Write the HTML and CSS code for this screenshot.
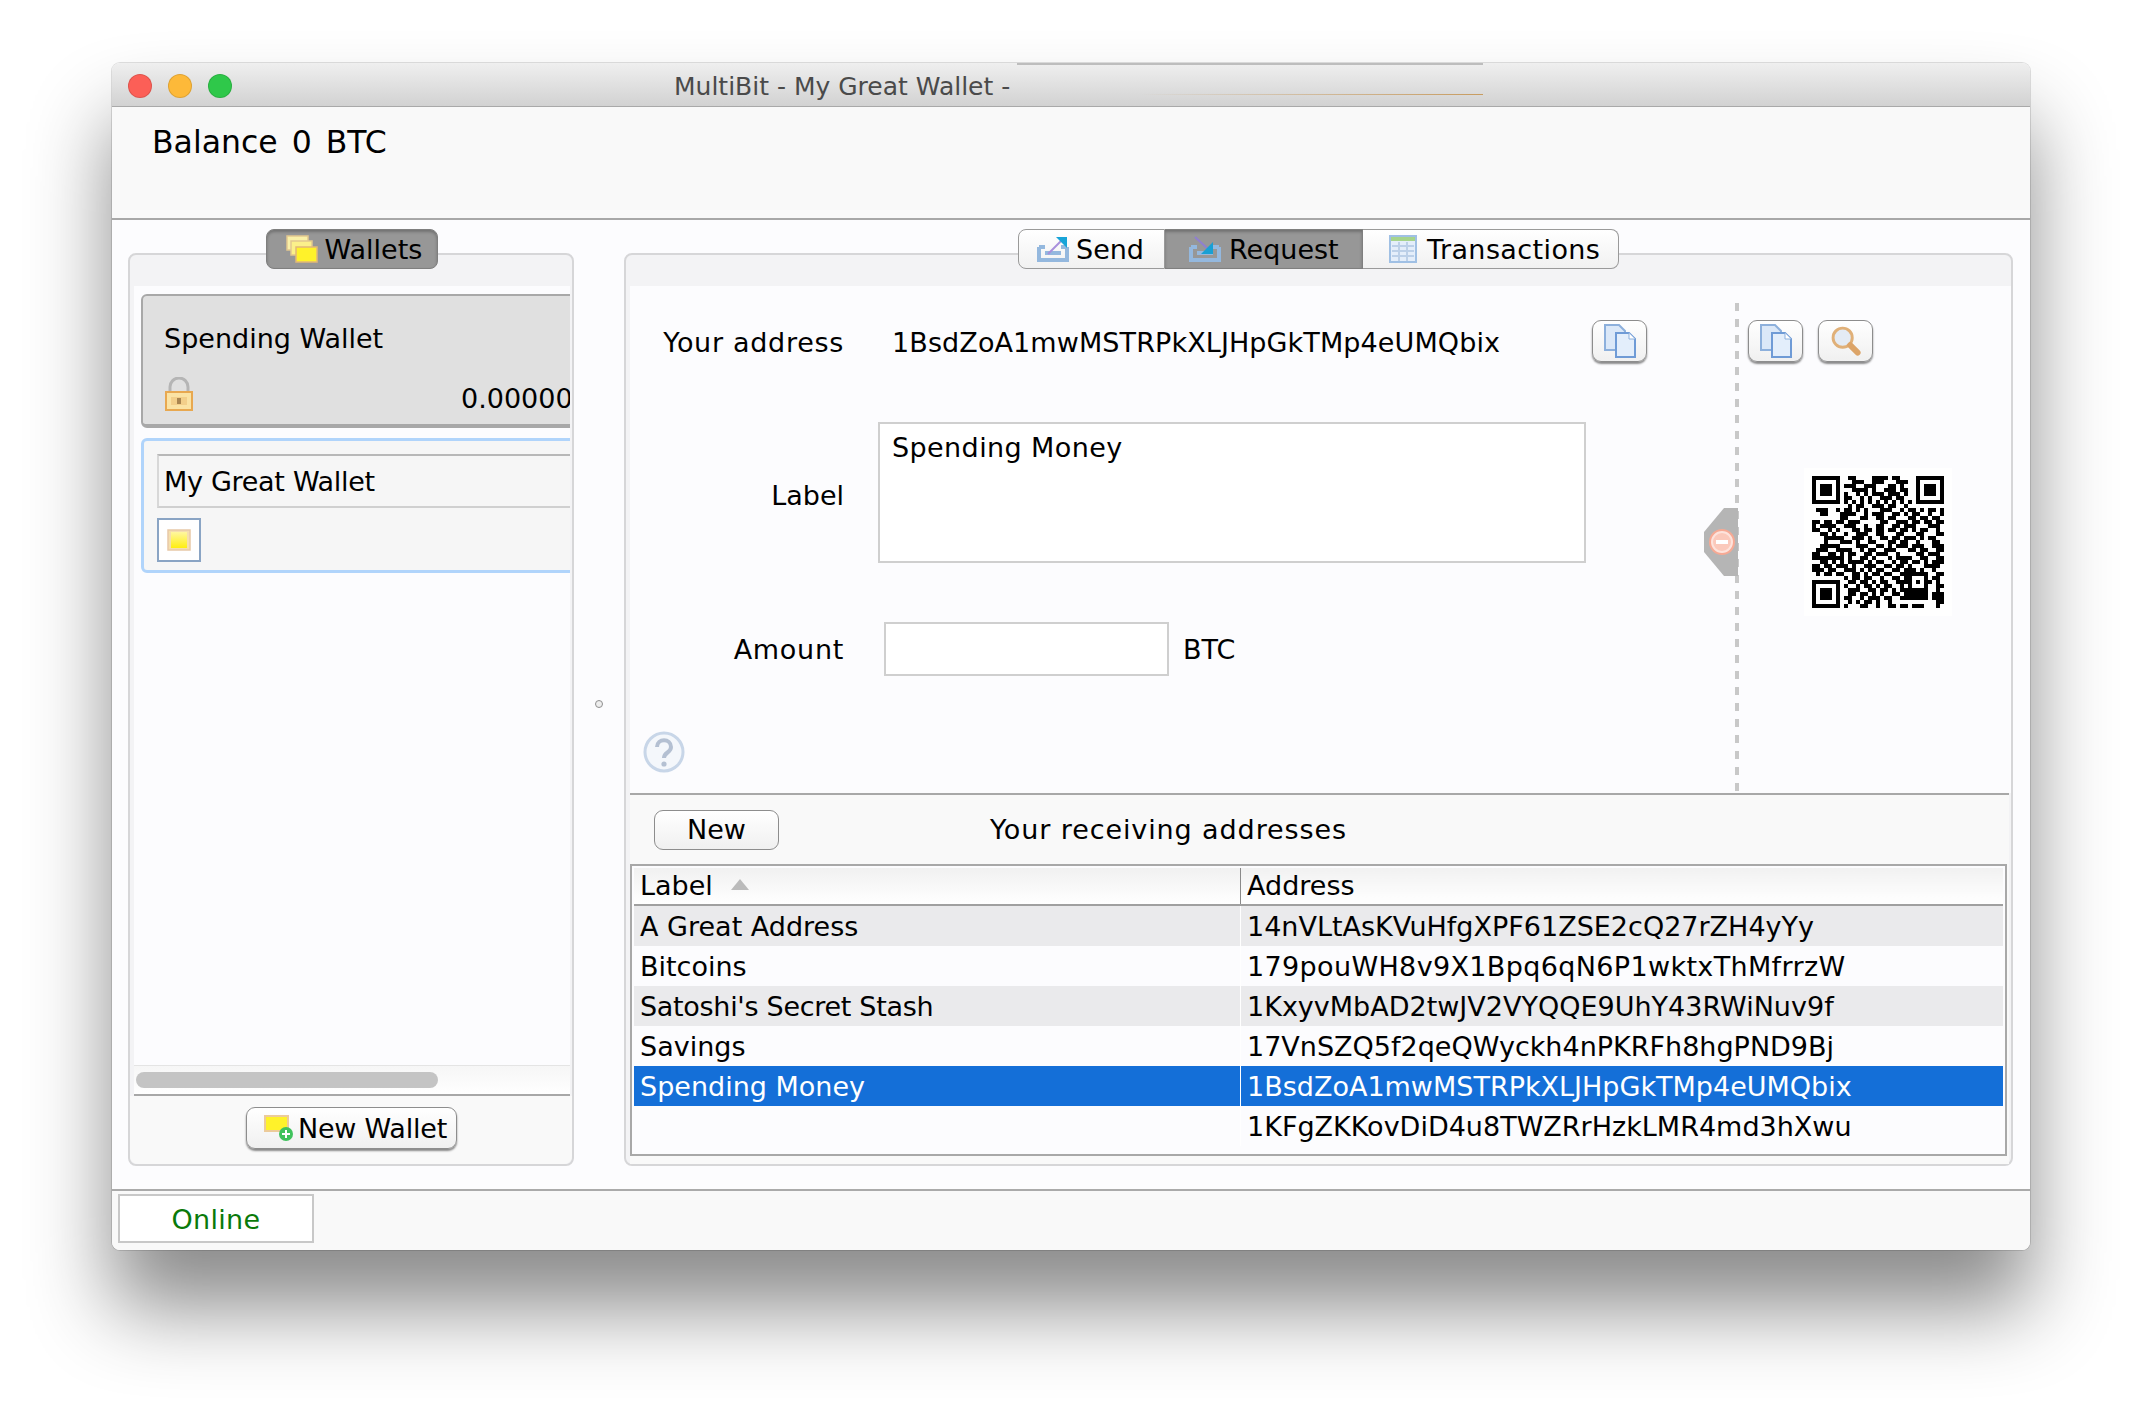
FILE: index.html
```html
<!DOCTYPE html>
<html lang="en">
<head>
    <meta charset="UTF-8">
    <meta name="viewport" content="width=device-width, initial-scale=1.0">
    <title>MultiBit - My Great Wallet -</title>
    <link rel="stylesheet" href="styles.css">
</head>
<body>
    <svg class="icon-defs" width="0" height="0">
        <defs>
            <linearGradient id="bill" x1="0" y1="0" x2="0" y2="1">
                <stop offset="0" stop-color="#fff7a0"/>
                <stop offset="1" stop-color="#ffee10"/>
            </linearGradient>
            <symbol id="i-copy" viewBox="0 0 34 34">
                <path d="M2 1h14l6 6v19H2z" fill="#dbe8f8" stroke="#8db0dc" stroke-width="2"/>
                <path d="M13 9h13l6 6v18H13z" fill="#e3eefb" stroke="#6f9bd6" stroke-width="2"/>
                <path d="M26 9v6h6" fill="#fff" stroke="#8db0dc"/>
            </symbol>
            <symbol id="i-bill" viewBox="0 0 24 22">
                <rect x="1" y="1" width="22" height="20" fill="#f5dfae" stroke="#e8c9a8" stroke-width="1.5"/>
                <rect x="4" y="3" width="16" height="16" fill="url(#bill)"/>
            </symbol>
        </defs>
    </svg>

    <div class="window">
        <div class="titlebar">
            <span class="light light-red"></span>
            <span class="light light-amber"></span>
            <span class="light light-green"></span>
            <span class="title-text">MultiBit - My Great Wallet -</span>
            <span class="title-glitch-top"></span>
            <span class="title-glitch-low"></span>
        </div>

        <div class="balance-bar">
            <span>Balance</span>
            <span>0</span>
            <span>BTC</span>
        </div>

        <div class="main">
            <!-- Wallets -->
            <div class="panel wallets-panel">
                <div class="tabs">
                    <div class="tab tab-single tab-active">
                        <svg class="tab-icon" width="32" height="28" viewBox="0 0 32 28">
                            <rect x="1" y="1" width="21" height="14" fill="#f9f0a8" stroke="#e2c78e" stroke-width="1.5"/>
                            <rect x="5" y="6" width="21" height="14" fill="#fbf08a" stroke="#e2c78e" stroke-width="1.5"/>
                            <rect x="10" y="12" width="21" height="15" fill="#fff22a" stroke="#e2b878" stroke-width="1.5"/>
                        </svg>
                        Wallets
                    </div>
                </div>
                <div class="wallet-list">
                    <div class="wallet-card wallet-card-idle">
                        <div class="wallet-name">Spending Wallet</div>
                        <div class="wallet-row">
                            <svg class="lock-icon" width="30" height="34" viewBox="0 0 30 34">
                                <path d="M6 16V10a9 9 0 0 1 18 0v6" fill="none" stroke="#b5b5b5" stroke-width="3"/>
                                <rect x="2" y="15" width="26" height="18" fill="#fbe3a4" stroke="#e8a850" stroke-width="2"/>
                                <rect x="7" y="20" width="16" height="8" fill="#f3cf8a"/>
                                <rect x="13" y="21" width="4" height="6" fill="#a98550"/>
                            </svg>
                            <span class="wallet-amount">0.00000000</span>
                        </div>
                    </div>
                    <div class="wallet-card wallet-card-active">
                        <div class="wallet-input">My Great Wallet</div>
                        <div class="wallet-icon-box">
                            <svg width="24" height="22"><use href="#i-bill"/></svg>
                        </div>
                    </div>
                </div>
                <div class="hscroll"><div class="hscroll-thumb"></div></div>
                <div class="panel-foot">
                    <button class="btn btn-new-wallet">
                        <svg width="30" height="26" viewBox="0 0 30 26">
                            <rect x="1" y="1" width="23" height="15" fill="#fff22a" stroke="#eccb9a" stroke-width="2"/>
                            <circle cx="22" cy="19" r="7" fill="#3fc25c"/>
                            <path d="M22 15v8M18 19h8" stroke="#fff" stroke-width="2"/>
                        </svg>
                        New Wallet
                    </button>
                </div>
            </div>

            <div class="splitter"><span class="splitter-dot"></span></div>

            <!-- Send / Request / Transactions -->
            <div class="panel detail-panel">
                <div class="tabs">
                    <div class="tab tab-first tab-send">
                        <svg class="tab-icon" width="32" height="26" viewBox="0 0 32 26">
                            <path d="M2 11v13h28V11M8 11H2M30 11h-6M8 17h16" fill="none" stroke="#94b8de" stroke-width="4"/>
                            <path d="M11 18 25 4" stroke="#a88fdc" stroke-width="2"/>
                            <path d="M19 1h11v11z" fill="#18a4d8"/>
                        </svg>
                        Send
                    </div>
                    <div class="tab tab-active tab-request">
                        <svg class="tab-icon" width="32" height="26" viewBox="0 0 32 26">
                            <path d="M2 11v13h28V11M8 11H2M30 11h-6M8 17h16" fill="none" stroke="#94b8de" stroke-width="4"/>
                            <path d="M6 1 19 13" stroke="#8f7fd0" stroke-width="2"/>
                            <path d="M24 6v12H12z" fill="#18a0d4"/>
                        </svg>
                        Request
                    </div>
                    <div class="tab tab-last tab-transactions">
                        <svg class="tab-icon" width="28" height="28" viewBox="0 0 28 28">
                            <rect x="1" y="1" width="26" height="26" fill="#e4eefa" stroke="#a0c0e4" stroke-width="2"/>
                            <rect x="2" y="2" width="24" height="4" fill="#a6d48c"/>
                            <path d="M3 11h22M3 16h22M3 21h22M10 7v19M18 7v19" stroke="#bcd0e8" stroke-width="2"/>
                        </svg>
                        Transactions
                    </div>
                </div>

                <div class="request-area">
                    <div class="request-form">
                        <div class="form-row form-row-address">
                            <div class="form-label">Your address</div>
                            <div class="address-value">1BsdZoA1mwMSTRPkXLJHpGkTMp4eUMQbix</div>
                            <button class="btn btn-icon btn-copy-address"><svg width="34" height="34"><use href="#i-copy"/></svg></button>
                        </div>
                        <div class="form-row form-row-label">
                            <div class="form-label">Label</div>
                            <div class="text-area">Spending Money</div>
                        </div>
                        <div class="form-row form-row-amount">
                            <div class="form-label">Amount</div>
                            <div class="amount-input"></div>
                            <div class="amount-unit">BTC</div>
                        </div>
                        <svg class="help-icon" width="42" height="42" viewBox="0 0 42 42">
                            <circle cx="21" cy="21" r="19" fill="#f4f7fb" stroke="#c8d6e8" stroke-width="3"/>
                            <path d="M14 16c0-9 14-9 14 0 0 6-7 5-7 11" fill="none" stroke="#b4c0d2" stroke-width="4"/>
                            <circle cx="21" cy="33" r="2.6" fill="#b4c0d2"/>
                        </svg>
                    </div>

                    <div class="qr-column">
                        <div class="collapse-tab">
                            <svg width="34" height="68" viewBox="0 0 34 68">
                                <path d="M34 0H20L0 24v20l20 24h14z" fill="#b5b5b5"/>
                                <circle cx="18" cy="34" r="13" fill="#f6a994"/>
                                <circle cx="18" cy="34" r="10" fill="#fbc9bb" stroke="#fde3dc" stroke-width="2"/>
                                <rect x="12" y="32" width="12" height="4" fill="#fff"/>
                            </svg>
                        </div>
                        <div class="qr-buttons">
                            <button class="btn btn-icon"><svg width="34" height="34"><use href="#i-copy"/></svg></button>
                            <button class="btn btn-icon">
                                <svg class="search-icon" width="30" height="30" viewBox="0 0 36 36">
                                    <circle cx="14" cy="14" r="11.5" fill="#e4ebf4" stroke="#e0b078" stroke-width="3.5"/>
                                    <path d="M23 23l9 9" stroke="#dca468" stroke-width="7" stroke-linecap="round"/>
                                </svg>
                            </button>
                        </div>
                        <div class="qr-box" id="qr"></div>
                    </div>
                </div>

                <div class="addresses">
                    <div class="addresses-head">
                        <button class="btn btn-new">New</button>
                        <div class="addresses-title">Your receiving addresses</div>
                    </div>
                    <div class="table-wrap">
                        <table class="address-table">
                            <thead>
                                <tr>
                                    <th class="col-label">Label <span class="sort-arrow"></span></th>
                                    <th>Address</th>
                                </tr>
                            </thead>
                            <tbody>
                                <tr class="row-alt"><td>A Great Address</td><td>14nVLtAsKVuHfgXPF61ZSE2cQ27rZH4yYy</td></tr>
                                <tr><td>Bitcoins</td><td class="addr-wide">179pouWH8v9X1Bpq6qN6P1wktxThMfrrzW</td></tr>
                                <tr class="row-alt"><td class="label-tight">Satoshi's Secret Stash</td><td>1KxyvMbAD2twJV2VYQQE9UhY43RWiNuv9f</td></tr>
                                <tr><td>Savings</td><td>17VnSZQ5f2qeQWyckh4nPKRFh8hgPND9Bj</td></tr>
                                <tr class="row-selected"><td>Spending Money</td><td>1BsdZoA1mwMSTRPkXLJHpGkTMp4eUMQbix</td></tr>
                                <tr><td></td><td>1KFgZKKovDiD4u8TWZRrHzkLMR4md3hXwu</td></tr>
                            </tbody>
                        </table>
                    </div>
                </div>
            </div>
        </div>

        <div class="status-bar">
            <div class="status-online">Online</div>
        </div>
    </div>
    <script src="qr.js"></script>
</body>
</html>
```

FILE: styles.css
```css
html, body {
    margin: 0;
    padding: 0;
    background: #fff;
    overflow: hidden;
}

body {
    height: 1410px;
    padding: 63px 112px 0;
    box-sizing: border-box;
    font-family: "DejaVu Sans", "Liberation Sans", sans-serif;
    font-size: 27px;
    color: #000;
}

.icon-defs {
    position: absolute;
}

.window {
    width: 1918px;
    height: 1187px;
    display: flex;
    flex-direction: column;
    background: #fcfcfe;
    border-radius: 8px;
    box-shadow: 0 58px 82px rgba(0, 0, 0, 0.46), 0 0 0 1px rgba(0, 0, 0, 0.12);
}

/* title bar */
.titlebar {
    position: relative;
    height: 44px;
    flex: none;
    display: flex;
    align-items: center;
    gap: 16px;
    padding: 2px 0 0 16px;
    box-sizing: border-box;
    background: linear-gradient(#efefef, #d2d2d2);
    border-bottom: 1px solid #a9a9a9;
    border-radius: 8px 8px 0 0;
}

.light {
    width: 24px;
    height: 24px;
    border-radius: 50%;
    box-sizing: border-box;
    border: 1px solid rgba(0, 0, 0, 0.12);
}

.light-red { background: #fc5f57; }
.light-amber { background: #fdb939; }
.light-green { background: #2fc84a; }

.title-text {
    margin-left: 426px;
    padding-top: 2px;
    font-size: 25px;
    color: #4a4a4a;
    white-space: nowrap;
}

.title-glitch-top {
    position: absolute;
    left: 905px;
    top: 0;
    width: 466px;
    height: 2px;
    background: #bdbdbd;
}

.title-glitch-low {
    position: absolute;
    left: 1028px;
    top: 31px;
    width: 343px;
    height: 1px;
    background: linear-gradient(to right, rgba(200, 150, 90, 0), #c89c60);
}

/* balance */
.balance-bar {
    height: 113px;
    flex: none;
    box-sizing: border-box;
    display: flex;
    gap: 14px;
    padding: 17px 40px 0;
    font-size: 31.5px;
    background: #f9f9f9;
    border-bottom: 2px solid #a8a8a8;
}

/* main area */
.main {
    flex: 1;
    display: flex;
    align-items: stretch;
    padding: 33px 17px 23px 16px;
    min-height: 0;
}

.panel {
    display: flex;
    flex-direction: column;
    box-sizing: border-box;
    background: #f3f3f5;
    border: 2px solid #d6d6d8;
    border-radius: 8px;
}

.wallets-panel {
    width: 446px;
    flex: none;
    padding: 0 2px 0 4px;
}

.detail-panel {
    flex: 1;
    padding: 0 4px;
}

.splitter {
    width: 50px;
    flex: none;
    display: flex;
    align-items: center;
    justify-content: center;
}

.splitter-dot {
    width: 8px;
    height: 8px;
    margin-bottom: 12px;
    box-sizing: border-box;
    border: 1px solid #8f8f8f;
    border-radius: 50%;
    background: #eee;
}

/* tabs */
.tabs {
    height: 40px;
    margin: -26px 0 17px;
    display: flex;
    justify-content: center;
    flex: none;
}

.tab {
    display: flex;
    align-items: center;
    gap: 10px;
    box-sizing: border-box;
    font-size: 27px;
    background: linear-gradient(#fff, #f1f1f1);
    border: 1px solid #9a9a9a;
    border-left: 0;
    padding: 0 12px 0 18px;
    white-space: nowrap;
}

.tab-icon {
    flex: none;
}

.tab-first {
    border-left: 1px solid #9a9a9a;
    border-radius: 8px 0 0 8px;
}

.tab-last {
    border-radius: 0 8px 8px 0;
}

.tab-single {
    width: 172px;
    gap: 7px;
    padding-left: 19px;
    margin-left: -1px;
    border-left: 1px solid #888;
    border-radius: 8px;
}

.tab-active {
    background: #979797;
    border-color: #7f7f7f;
    box-shadow: inset 0 2px 3px rgba(0, 0, 0, 0.25);
}

.tab-send {
    width: 147px;
    padding-left: 18px;
    gap: 7px;
}

.tab-request {
    width: 198px;
    padding-left: 24px;
    gap: 8px;
}

.tab-transactions {
    width: 256px;
    padding-left: 26px;
    letter-spacing: 0.4px;
}

/* wallet list */
.wallet-list {
    flex: 1;
    background: #fcfcfe;
    overflow: hidden;
    padding: 8px 0 0 7px;
    min-height: 0;
}

.wallet-card {
    width: 560px;
    box-sizing: border-box;
    white-space: nowrap;
}

.wallet-card-idle {
    height: 134px;
    padding: 25px 21px 0;
    background: #e0e0e0;
    border: 2px solid #a8a8a8;
    border-bottom-width: 4px;
    border-radius: 6px;
}

.wallet-name {
    font-size: 27px;
    line-height: 36px;
}

.wallet-row {
    display: flex;
    align-items: flex-end;
    margin-top: 20px;
}

.lock-icon {
    flex: none;
}

.wallet-amount {
    margin-left: 267px;
    line-height: 34px;
    position: relative;
    top: 5px;
}

.wallet-card-active {
    height: 135px;
    margin-top: 10px;
    padding: 13px;
    background: #f6f6f6;
    border: 3px solid #b0d4fb;
    border-radius: 6px;
}

.wallet-input {
    height: 54px;
    box-sizing: border-box;
    padding-left: 5px;
    line-height: 52px;
    letter-spacing: -0.3px;
    border-top: 2px solid #b8b8b8;
    border-bottom: 2px solid #d0d0d0;
    border-left: 2px solid #d8d8d8;
}

.wallet-icon-box {
    width: 44px;
    height: 44px;
    margin-top: 10px;
    box-sizing: border-box;
    display: flex;
    align-items: center;
    justify-content: center;
    background: #fff;
    border: 2px solid #8aa4c4;
}

.hscroll {
    height: 31px;
    flex: none;
    box-sizing: border-box;
    padding: 6px 2px;
    background: linear-gradient(#f6f6f6, #fff);
    border-top: 1px solid #e4e4e4;
    border-bottom: 2px solid #a8a8a8;
}

.hscroll-thumb {
    width: 302px;
    height: 16px;
    border-radius: 8px;
    background: #c4c4c4;
}

.panel-foot {
    height: 68px;
    flex: none;
    display: flex;
    justify-content: center;
    padding-top: 11px;
    box-sizing: border-box;
    background: #f9f9f9;
    margin: 0 -2px 0 -4px;
    border-radius: 0 0 8px 8px;
}

/* buttons */
.btn {
    box-sizing: border-box;
    font: inherit;
    color: #000;
    display: flex;
    align-items: center;
    justify-content: center;
    padding: 0;
    background: linear-gradient(#fff, #f0f0f0);
    border: 1px solid #8d8d8d;
    border-radius: 9px;
    box-shadow: 0 2px 2px rgba(0, 0, 0, 0.45);
}

.btn-new-wallet {
    width: 211px;
    height: 42px;
    gap: 4px;
    padding-left: 9px;
    letter-spacing: -0.2px;
}

.btn-icon {
    width: 55px;
    height: 42px;
}

.btn-icon svg {
    width: 34px;
    height: 34px;
}

.btn-icon .search-icon {
    width: 30px;
    height: 30px;
}

.btn-new {
    width: 125px;
    height: 40px;
    box-shadow: none;
}

/* request form */
.request-area {
    height: 507px;
    flex: none;
    display: flex;
    background: #fcfcfe;
    margin: 0 -4px 0 0;
}

.request-form {
    width: 1105px;
    flex: none;
    padding-top: 34px;
    box-sizing: border-box;
}

.form-row {
    display: flex;
}

.form-label {
    width: 214px;
    flex: none;
    text-align: right;
    letter-spacing: 0.7px;
}

.form-row-address {
    height: 42px;
    align-items: center;
}

.form-row-address .form-label,
.address-value {
    position: relative;
    top: 1px;
}

.address-value {
    width: 700px;
    margin-left: 48px;
    flex: none;
    letter-spacing: 0.1px;
}

.form-row-label {
    height: 141px;
    margin-top: 60px;
    align-items: center;
}

.form-row-label .form-label {
    letter-spacing: 0;
    padding-top: 6px;
}

.text-area {
    width: 708px;
    height: 141px;
    margin-left: 34px;
    padding: 8px 12px;
    box-sizing: border-box;
    letter-spacing: 0.4px;
    background: #fff;
    border: 2px solid #cfcfcf;
}

.form-row-amount {
    height: 54px;
    margin-top: 59px;
    align-items: center;
}

.amount-input {
    width: 285px;
    height: 54px;
    margin-left: 40px;
    box-sizing: border-box;
    background: #fff;
    border: 2px solid #cfcfcf;
}

.amount-unit {
    margin-left: 14px;
}

.help-icon {
    display: block;
    margin: 55px 0 0 13px;
}

.qr-column {
    position: relative;
    flex: 1;
    margin-top: 17px;
    padding: 17px 0 0 13px;
    background: repeating-linear-gradient(#c8c8c8 0 8px, transparent 8px 16px) 0 0 / 4px 100% no-repeat;
    box-sizing: border-box;
}

.collapse-tab {
    position: absolute;
    left: -31px;
    top: 205px;
    line-height: 0;
}

.qr-buttons {
    display: flex;
    gap: 15px;
}

.qr-box {
    width: 148px;
    height: 148px;
    margin: 106px 0 0 56px;
    box-sizing: border-box;
    padding: 8px;
    background: #fff;
}

.qr-box svg {
    display: block;
}

/* addresses table */
.addresses {
    flex: 1;
    display: flex;
    flex-direction: column;
    background: #f9f9f9;
    border-top: 2px solid #a8a8a8;
    margin: 0 -2px 0 0;
    min-height: 0;
}

.addresses-head {
    height: 69px;
    flex: none;
    display: flex;
    align-items: center;
    padding-left: 24px;
}

.addresses-title {
    margin-left: 211px;
    letter-spacing: 0.9px;
}

.table-wrap {
    height: 292px;
    box-sizing: border-box;
    margin: 0 2px 0 0;
    padding: 2px 2px 0;
    background: #fcfcfe;
    border: 2px solid #a8a8a8;
}

.address-table {
    width: 1369px;
    table-layout: fixed;
    border-collapse: collapse;
}

.address-table th {
    height: 36px;
    padding: 0 0 0 6px;
    font-weight: normal;
    text-align: left;
    line-height: 30px;
    background: linear-gradient(#f1f1f1, #fff);
    border-bottom: 2px solid #a0a0a0;
    border-left: 1px solid #8a8a8a;
}

.address-table th.col-label {
    width: 600px;
    border-left: 0;
}

.sort-arrow {
    display: inline-block;
    margin-left: 10px;
    vertical-align: 5px;
    border-left: 9px solid transparent;
    border-right: 9px solid transparent;
    border-bottom: 11px solid #bbb;
}

.address-table td {
    height: 40px;
    padding: 0 0 0 6px;
    white-space: nowrap;
    border-left: 1px solid #fff;
}

.address-table td:first-child {
    border-left: 0;
}

.addr-wide {
    letter-spacing: 0.35px;
}

.label-tight {
    letter-spacing: -0.3px;
}

.row-alt td {
    background: #eaeaec;
}

.row-selected td {
    background: #146fd8;
    color: #fff;
}

/* status bar */
.status-bar {
    height: 61px;
    flex: none;
    padding: 3px 0 0 6px;
    box-sizing: border-box;
    background: #f9f9f9;
    border-top: 2px solid #aaa;
    border-radius: 0 0 8px 8px;
}

.status-online {
    width: 196px;
    height: 49px;
    box-sizing: border-box;
    background: #fff;
    border: 2px solid #c8c8c8;
    text-align: center;
    line-height: 48px;
    letter-spacing: 0.3px;
    color: #0a7a0a;
}
```

FILE: qr.js
```js
// QR modules of the address, one string per row
var rows = [
    "111111100110000111101100001111111",
    "100000100011100111000111001000001",
    "101110101110011100011010001011101",
    "101110100011110100111011001011101",
    "101110101001010111011101001011101",
    "100000101100101001110110001000001",
    "111111101010101010101010101111111",
    "000000000101100111011001000000000",
    "011100101101010001110010110101101",
    "001100011110010111001101011001001",
    "000000011000110011011000110110110",
    "110110110111000001100111011011011",
    "101111001110010011001101110001110",
    "110010100011011011011011010110010",
    "001101001001110011000110001100011",
    "000111110011101001101101110101100",
    "000100011101001100011011001000110",
    "001111100001110011010111011100111",
    "011100111100101100111000110110011",
    "110011010110011011100100001101110",
    "111111110100110100010111100110011",
    "001101010111101011001011011010111",
    "110110111010011100110110100011110",
    "111011001110101011001101110100100",
    "010110110011010110110011111110011",
    "000000001011011001001101100010110",
    "111111100110110101100111101011010",
    "100000101001011010110010100010011",
    "101110100111001101101011111110010",
    "101110100110110101001101111110111",
    "101110101100101110110011111110111",
    "100000100101011010010000000000011",
    "111111101000110010011011011100010"
];

var d = "";
rows.forEach(function (row, y) {
    row.split("").forEach(function (cell, x) {
        if (cell === "1") {
            d += "M" + x + " " + y + "h1v1h-1z";
        }
    });
});

document.getElementById("qr").innerHTML =
    '<svg width="132" height="132" viewBox="0 0 33 33"><path d="' + d + '" fill="#000"/></svg>';
```
